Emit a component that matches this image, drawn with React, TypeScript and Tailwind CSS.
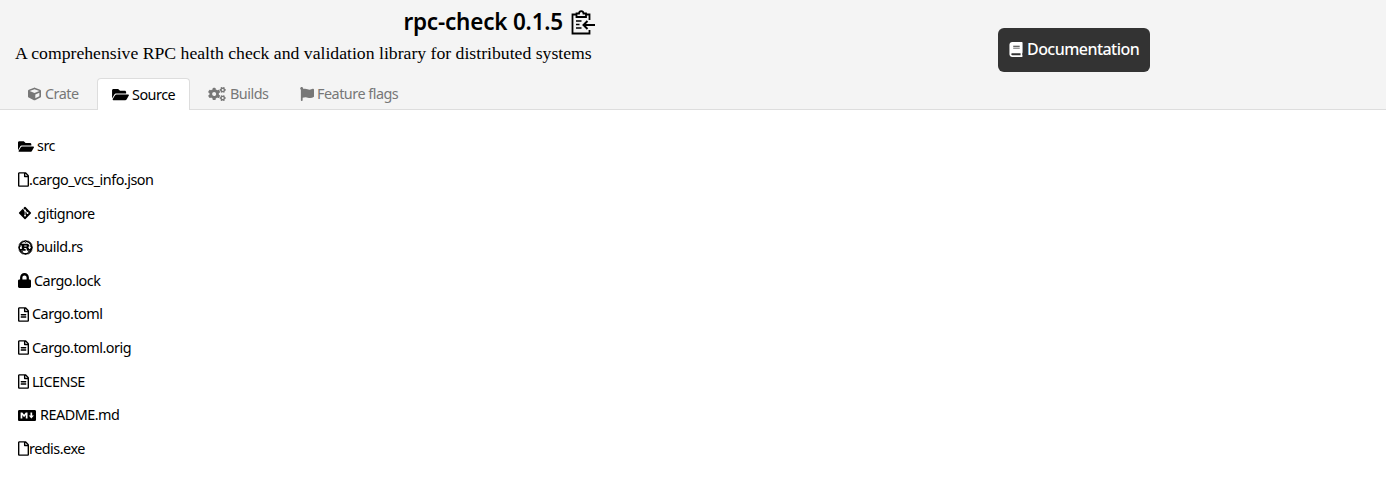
import { FaBook, FaCube, FaCogs, FaFlag, FaFolderOpen, FaGitAlt, FaLock, FaMarkdown, FaRust, FaRegFile, FaRegFileAlt } from 'react-icons/fa';
import type { IconType } from 'react-icons';

const files: { name: string; icon: IconType; iconClass: string; gap: string }[] = [
  { name: 'src', icon: FaFolderOpen, iconClass: 'w-[16px] h-[15px]', gap: 'ml-[3px]' },
  { name: '.cargo_vcs_info.json', icon: FaRegFile, iconClass: 'w-[11px] h-[15px]', gap: 'ml-0' },
  { name: '.gitignore', icon: FaGitAlt, iconClass: 'w-[14px] h-[14px] -ml-[0.5px]', gap: 'ml-[2.5px]' },
  { name: 'build.rs', icon: FaRust, iconClass: 'w-[15px] h-[15px]', gap: 'ml-[3px]' },
  { name: 'Cargo.lock', icon: FaLock, iconClass: 'w-[13px] h-[15px]', gap: 'ml-[3px]' },
  { name: 'Cargo.toml', icon: FaRegFileAlt, iconClass: 'w-[11px] h-[15px]', gap: 'ml-[3px]' },
  { name: 'Cargo.toml.orig', icon: FaRegFileAlt, iconClass: 'w-[11px] h-[15px]', gap: 'ml-[3px]' },
  { name: 'LICENSE', icon: FaRegFileAlt, iconClass: 'w-[11px] h-[15px]', gap: 'ml-[3px]' },
  { name: 'README.md', icon: FaMarkdown, iconClass: 'w-[18px] h-[15px]', gap: 'ml-[4px]' },
  { name: 'redis.exe', icon: FaRegFile, iconClass: 'w-[11px] h-[15px]', gap: 'ml-0' },
];

function ClipboardIcon() {
  return (
    <svg viewBox="0 0 24 26" className="w-[24px] h-[26px] shrink-0" fill="none" stroke="currentColor" strokeWidth="1.8">
      <path d="M18.5 11V5.5H15M5.5 5.5H1.5V24.5H18.5V21" />
      <path d="M5.5 8V4.5H8C8.3 1.2 12.2 1.2 12.5 4.5H15V8Z" />
      <path d="M5 12H10.5M5 15.5H8.5M5 19H10.5" strokeWidth="1.6" />
      <path d="M24 16H12.5M16.5 12L12.5 16L16.5 20" strokeWidth="2" />
    </svg>
  );
}

export default function App() {
  return (
    <div className="min-h-screen bg-white text-black font-['Noto_Sans',sans-serif]">
      <header className="h-[110px] bg-[#f4f4f4] border-b border-[#ddd]">
        <div className="flex h-[78px]">
          <div className="w-[595px] flex flex-col items-end">
            <h1 className="h-[42px] pt-[2px] flex items-center gap-[8px] text-[22.5px] font-semibold tracking-[-0.2px] leading-none">
              rpc-check 0.1.5
              <ClipboardIcon />
            </h1>
            <p className="w-[580px] text-[17.7px] leading-[20px] font-['Liberation_Serif',serif] mt-[1px] whitespace-nowrap">
              A comprehensive RPC health check and validation library for distributed systems
            </p>
          </div>
          <div className="ml-[403px] mt-[28px]">
            <a className="flex items-center gap-[4px] w-[152px] h-[44px] pl-[11px] pb-[2px] rounded-[6px] bg-[#333] text-white text-[16px] font-medium tracking-[-0.55px]">
              <FaBook className="w-[14px] h-[15px] shrink-0" />
              Documentation
            </a>
          </div>
        </div>
        <nav className="flex pl-[13px] h-[32px] text-[14.4px] tracking-[-0.5px] text-[#777]">
          <div className="flex items-center gap-[4px] pl-[15px] w-[84px]">
            <FaCube className="w-[13px] h-[14px] shrink-0" />
            Crate
          </div>
          <div className="flex items-center gap-[3px] pl-[14px] w-[93px] h-[32px] bg-white text-black border border-b-0 border-[#ddd] rounded-t-[4px]">
            <FaFolderOpen className="w-[17px] h-[15px] shrink-0" />
            Source
          </div>
          <div className="flex items-center gap-[4px] pl-[18px] w-[110px]">
            <FaCogs className="w-[18px] h-[14px] shrink-0" />
            Builds
          </div>
          <div className="flex items-center gap-[3px]">
            <FaFlag className="w-[14px] h-[14px] shrink-0" />
            Feature flags
          </div>
        </nav>
      </header>
      <main className="pl-[18px] pt-[19.5px]">
        <ul className="flex flex-col">
          {files.map((f) => {
            const Icon = f.icon;
            return (
              <li key={f.name} className="h-[33.6px] flex items-center text-[14.4px] tracking-[-0.5px]">
                <Icon className={`${f.iconClass} shrink-0`} />
                <span className={f.gap}>{f.name}</span>
              </li>
            );
          })}
        </ul>
      </main>
    </div>
  );
}
